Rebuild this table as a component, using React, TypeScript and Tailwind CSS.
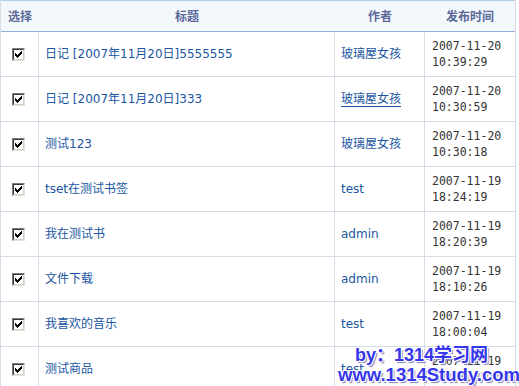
import React from "react"

type Row = {
  title: string
  author: string
  date: string
  time: string
  hover?: boolean
}

const rows: Row[] = [
  { title: "日记 [2007年11月20日]5555555", author: "玻璃屋女孩", date: "2007-11-20", time: "10:39:29" },
  { title: "日记 [2007年11月20日]333", author: "玻璃屋女孩", date: "2007-11-20", time: "10:30:59", hover: true },
  { title: "测试123", author: "玻璃屋女孩", date: "2007-11-20", time: "10:30:18" },
  { title: "tset在测试书签", author: "test", date: "2007-11-19", time: "18:24:19" },
  { title: "我在测试书", author: "admin", date: "2007-11-19", time: "18:20:39" },
  { title: "文件下载", author: "admin", date: "2007-11-19", time: "18:10:26" },
  { title: "我喜欢的音乐", author: "test", date: "2007-11-19", time: "18:00:04" },
  { title: "测试商品", author: "test", date: "2007-11-19", time: "17:58:12" },
]

function CheckBox() {
  return (
    <span className="flex w-[13px] h-[13px] border border-t-[#7b7b7b] border-l-[#7b7b7b] border-b-[#e4e1da] border-r-[#e4e1da] bg-[#d4d0c8]">
      <span className="flex flex-1 items-center justify-center border border-t-[#3a3a3a] border-l-[#3a3a3a] border-b-[#d4d0c8] border-r-[#d4d0c8] bg-white">
        <svg width="7" height="7" viewBox="0 0 7 7">
          <path d="M0 2h1v1h1v1h1V3h1V2h1V1h1V0h1v3H6v1H5v1H4v1H3v1H2V6H1V5H0z" fill="#000" />
        </svg>
      </span>
    </span>
  )
}

export default function App() {
  return (
    <div className="relative w-[519px] h-[386px] overflow-hidden bg-white font-['DejaVu_Sans','Noto_Sans_CJK_SC',sans-serif] text-[12px]">
      <div className="w-[516px] border-l border-r border-[#d6dce8]">
        {/* header */}
        <div className="flex h-[32px] border-t border-t-[#b4cde8] border-b border-b-[#8fb2da] bg-[#f3f8fd] text-[#5b6898] font-bold font-['Noto_Sans_CJK_SC',sans-serif] text-[12px]">
          <div className="w-[38px] flex items-center justify-center">选择</div>
          <div className="w-[296px] flex items-center justify-center">标题</div>
          <div className="w-[90px] flex items-center justify-center">作者</div>
          <div className="w-[90px] flex items-center justify-center">发布时间</div>
        </div>

        {/* rows */}
        {rows.map((r, i) => (
          <div key={i} className="flex h-[45px] border-b border-[#d6dce8]">
            <div className="w-[38px] flex items-center justify-center border-r border-[#d6dce8] pr-[2px]">
              <CheckBox />
            </div>
            <div className="w-[296px] flex items-center pl-[6px] border-r border-[#d6dce8] text-[#1a56a2]">
              {r.title}
            </div>
            <div className="w-[90px] flex items-center pl-[6px] border-r border-[#d6dce8] text-[#1a56a2]">
              <span className={r.hover ? "underline underline-offset-[3px]" : ""}>{r.author}</span>
            </div>
            <div className="w-[90px] flex flex-col justify-center pl-[7px] font-['DejaVu_Sans_Mono',monospace] text-[11.5px] leading-[16px] text-[#333]">
              <span>{r.date}</span>
              <span>{r.time}</span>
            </div>
          </div>
        ))}
      </div>

      {/* watermark */}
      <div className="absolute left-[355px] top-[344px] font-['Liberation_Sans','Noto_Sans_CJK_SC',sans-serif] font-bold text-[18px] leading-[22px] text-[#3636ea] whitespace-nowrap [text-shadow:1px_1px_0_#fff,-1px_-1px_0_#fff,1px_-1px_0_#fff,-1px_1px_0_#fff,2px_2px_1px_#8080c0]">
        by：1314学习网
      </div>
      <div className="absolute left-[338px] top-[364px] font-['Liberation_Sans',sans-serif] font-bold text-[18.5px] leading-[22px] text-[#3636ea] whitespace-nowrap [text-shadow:1px_1px_0_#fff,-1px_-1px_0_#fff,1px_-1px_0_#fff,-1px_1px_0_#fff,2px_2px_1px_#8080c0]">
        www.1314Study.com
      </div>
    </div>
  )
}
